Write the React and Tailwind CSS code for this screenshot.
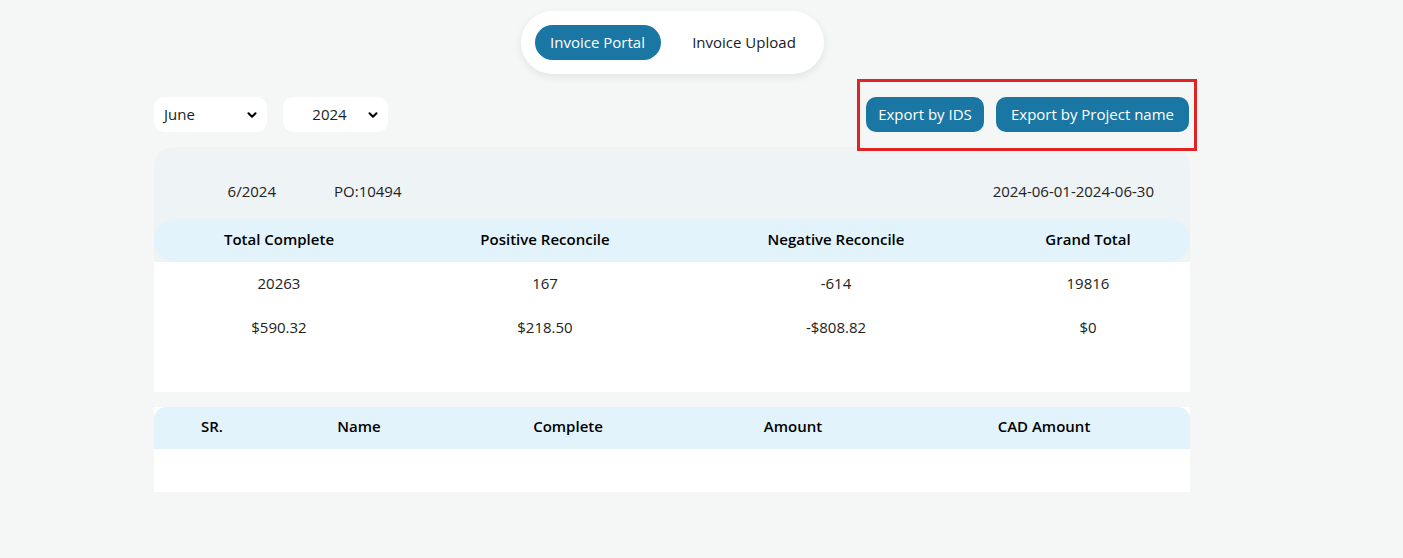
import { ChevronDown } from "lucide-react";

const font = { fontFamily: '"Open Sans", "Liberation Sans", sans-serif' };

function Pick({ label, w, center }) {
  return (
    <div className={`flex items-center h-[35px] bg-white rounded-[10px] pl-[10px] pr-[8px] ${w}`}>
      <span className={`flex-1 text-[15px] text-[#222] ${center ? "text-center" : ""}`}>{label}</span>
      <ChevronDown size={14} strokeWidth={3.5} className="text-black" />
    </div>
  );
}

function App() {
  const sumCols = ["w-[250px]", "w-[282px]", "w-[300px]", "w-[204px]"];
  const sumHead = ["Total Complete", "Positive Reconcile", "Negative Reconcile", "Grand Total"];
  const sumRows = [
    ["20263", "167", "-614", "19816"],
    ["$590.32", "$218.50", "-$808.82", "$0"],
  ];
  const tblCols = ["w-[116px]", "w-[178px]", "w-[240px]", "w-[210px]", "w-[292px]"];
  const tblHead = ["SR.", "Name", "Complete", "Amount", "CAD Amount"];

  return (
    <div className="min-h-[558px] bg-[#f5f6f6] pt-[11px]" style={font}>
      <div className="ml-[154px] w-[1036px]">
        {/* toggle */}
        <div className="flex justify-center">
          <div className="flex items-center h-[63px] w-[303px] bg-white rounded-full shadow-[0_3px_8px_rgba(0,0,0,0.08)] pl-[14px]">
            <div className="flex items-center justify-center h-[35px] w-[126px] rounded-full bg-[#1a76a3] text-white text-[15px]">
              Invoice Portal
            </div>
            <div className="flex-1 text-center text-[15px] text-[#1a1a1a] pl-[4px]">Invoice Upload</div>
          </div>
        </div>

        {/* filters */}
        <div className="flex items-center justify-between mt-[23px]">
          <div className="flex gap-[16px]">
            <Pick label="June" w="w-[113px]" />
            <Pick label="2024" w="w-[105px]" center />
          </div>
          <div className="relative flex gap-[12px] mr-[1px]">
            <button className="h-[35px] w-[118px] rounded-[10px] bg-[#1a76a3] text-white text-[15px] font-medium">
              Export by IDS
            </button>
            <button className="h-[35px] w-[193px] rounded-[10px] bg-[#1a76a3] text-white text-[15px] font-medium">
              Export by Project name
            </button>
            <div className="absolute -left-[9px] -right-[8px] -top-[18px] -bottom-[19px] border-[3px] border-[#e02424] pointer-events-none" />
          </div>
        </div>

        {/* summary */}
        <div className="mt-[15px] bg-white rounded-tl-[18px] rounded-tr-[18px] overflow-hidden">
          <div className="flex items-end h-[72px] bg-[#eef3f6] pb-[17px] text-[15px] text-[#222]">
            <div className="w-[122px] text-right">6/2024</div>
            <div className="ml-[58px]">PO:10494</div>
            <div className="ml-auto mr-[36px]">2024-06-01-2024-06-30</div>
          </div>
          <div className="bg-[#eef3f6]">
            <div className="flex items-center h-[43px] pb-[2px] bg-[#e3f3fb] rounded-[22px]">
              {sumHead.map((h, i) => (
                <div key={h} className={`${sumCols[i]} text-center text-[15px] font-semibold text-black`}>{h}</div>
              ))}
            </div>
          </div>
          <div className="bg-white pb-[42px]">
            {sumRows.map((r, ri) => (
              <div key={ri} className="flex items-center h-[44px] pb-[2px]">
                {r.map((c, i) => (
                  <div key={i} className={`${sumCols[i]} text-center text-[15px] text-[#222]`}>{c}</div>
                ))}
              </div>
            ))}
          </div>
        </div>

        {/* table */}
        <div className="mt-[15px] bg-white">
          <div className="flex items-center h-[42px] pb-[3px] bg-[#e3f3fb] rounded-t-[12px]">
            {tblHead.map((h, i) => (
              <div key={h} className={`${tblCols[i]} text-center text-[15px] font-semibold text-black`}>{h}</div>
            ))}
          </div>
          <div className="h-[43px]" />
        </div>
      </div>
    </div>
  );
}

export default App;
